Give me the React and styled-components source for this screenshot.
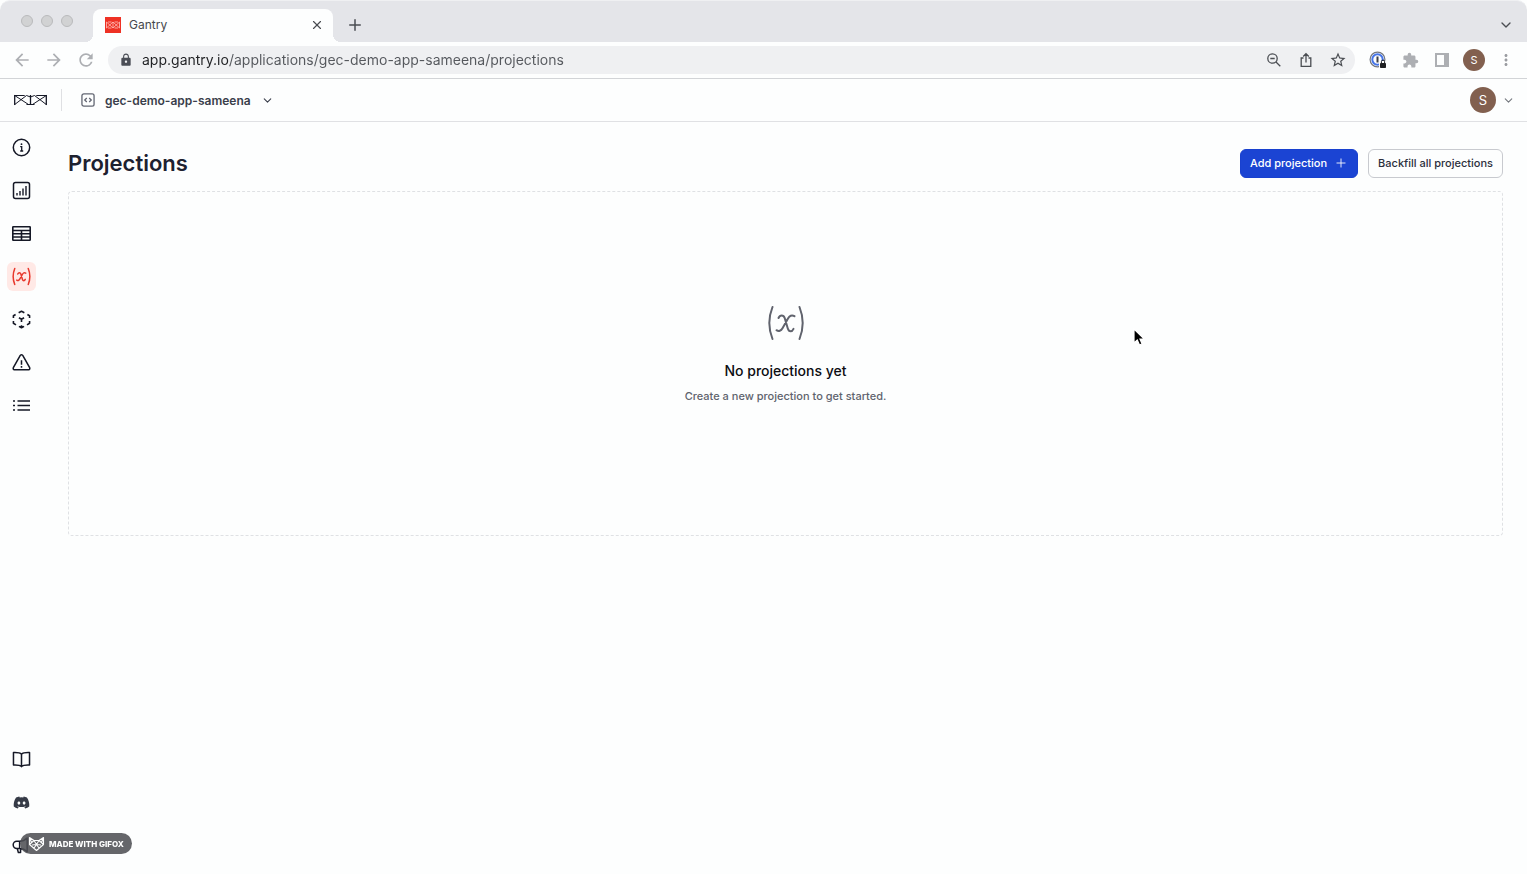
import { useState } from "react";
import styled, { createGlobalStyle } from "styled-components";
import { ChevronDown, Plus, X } from "lucide-react";
import { FaDiscord } from "react-icons/fa";
import {
  MdArrowBack,
  MdArrowForward,
  MdExtension,
  MdLock,
  MdMoreVert,
  MdRefresh,
  MdStarBorder,
} from "react-icons/md";

const GlobalStyle = createGlobalStyle`
  *, *::before, *::after {
    box-sizing: border-box;
  }

  body {
    margin: 0;
    background: #fdfefe;
    color: #1f2433;
    font-family: Inter, "Liberation Sans", sans-serif;
  }

  button, input {
    font-family: inherit;
  }
`;

const Page = styled.div`
  min-height: 100vh;
  display: flex;
  flex-direction: column;
`;

/* browser window */

const TabStrip = styled.div`
  height: 42px;
  padding: 8px 5px 0 21px;
  display: flex;
  align-items: stretch;
  background: #e4e5e9;
  border-top: 1px solid #eff0f2;
  border-radius: 10px 10px 0 0;
`;

const Lights = styled.div`
  display: flex;
  gap: 8px;
  margin: 6px 20px 0 0;
`;

const Light = styled.span`
  width: 12px;
  height: 12px;
  border-radius: 50%;
  background: #d1d2d3;
  border: 1px solid #b9babc;
`;

const Tab = styled.div`
  position: relative;
  width: 240px;
  margin-right: 6px;
  padding: 0 8px 2px 12px;
  display: flex;
  align-items: center;
  gap: 8px;
  background: #fdfefe;
  border-radius: 8px 8px 0 0;
  color: #45484d;
  font-size: 12px;

  &::before,
  &::after {
    content: "";
    position: absolute;
    bottom: 0;
    width: 8px;
    height: 8px;
  }

  &::before {
    right: 100%;
    background: radial-gradient(circle at 0 0, transparent 8px, #fdfefe 8px);
  }

  &::after {
    left: 100%;
    background: radial-gradient(circle at 100% 0, transparent 8px, #fdfefe 8px);
  }
`;

const TabTitle = styled.span`
  flex: 1;
`;

const IconButton = styled.button`
  width: ${(p) => p.$size || 32}px;
  height: ${(p) => p.$size || 32}px;
  flex: none;
  padding: 0;
  display: inline-flex;
  align-items: center;
  justify-content: center;
  border: none;
  border-radius: 6px;
  background: ${(p) => (p.$active ? "#ffe9e6" : "transparent")};
  color: ${(p) => p.$color || "#4a4d52"};
  cursor: pointer;
`;

const Spacer = styled.div`
  flex: 1;
`;

const Toolbar = styled.div`
  height: 37px;
  padding: 0 5px 0 6px;
  display: flex;
  align-items: center;
  border-bottom: 1px solid #d2d4d7;
`;

const AddressBar = styled.div`
  flex: 1;
  height: 28px;
  margin: 0 7px 0 6px;
  padding: 0 1px 0 11px;
  display: flex;
  align-items: center;
  background: #eff0f2;
  border-radius: 14px;
  color: #4a4d55;
`;

/* the host part of the address is darker than the path */
const AddressInput = styled.input`
  flex: 1;
  min-width: 0;
  height: 20px;
  margin-left: 9px;
  padding: 0 0 2px;
  border: none;
  outline: none;
  font-size: 14px;
  color: #55585d;
  background: linear-gradient(90deg, #202124 88px, #55585d 88px);
  background-clip: text;
  -webkit-background-clip: text;
  -webkit-text-fill-color: transparent;
`;

const Avatar = styled.span`
  width: ${(p) => p.$size}px;
  height: ${(p) => p.$size}px;
  display: inline-flex;
  align-items: center;
  justify-content: center;
  border-radius: 50%;
  background: #82604f;
  color: #ffffff;
  font-size: ${(p) => (p.$size > 24 ? 13 : 11)}px;
  font-weight: 400;
`;

/* application */

const AppHeader = styled.header`
  height: 43px;
  padding: 0 12px 0 14px;
  display: flex;
  align-items: center;
  border-bottom: 1px solid #e0e1e4;
`;

const HomeLink = styled.a`
  display: flex;
  padding-right: 14px;
  margin-right: 19px;
  height: 22px;
  align-items: center;
  border-right: 1px solid #dfe0e3;
  color: #151826;
`;

const AppPicker = styled.button`
  padding: 0;
  display: flex;
  align-items: center;
  gap: 10px;
  border: none;
  background: none;
  color: #3a3e4b;
  font-size: 12px;
  font-weight: 600;
  cursor: pointer;
`;

const AccountButton = styled(AppPicker)`
  margin-left: auto;
  gap: 6px;
  color: #74777e;
`;

const Body = styled.div`
  flex: 1;
  display: flex;
`;

const Sidebar = styled.nav`
  width: 43px;
  padding: 11px 0 14px 7px;
  display: flex;
  flex-direction: column;
  gap: 14px;
`;

const Main = styled.main`
  flex: 1;
  min-width: 0;
  padding: 27px 24px 24px 25px;
`;

const TitleRow = styled.div`
  display: flex;
  align-items: flex-start;
  gap: 10px;
  margin-bottom: 13px;
`;

const Title = styled.h1`
  flex: 1;
  margin: 0;
  font-size: 22px;
  line-height: 28px;
  font-weight: 600;
  color: #1d2130;
`;

const Button = styled.button`
  height: 29px;
  padding: 0 9px 1px;
  display: inline-flex;
  align-items: center;
  gap: 7px;
  border: 1px solid ${(p) => (p.$primary ? "#1941cf" : "#c8cacf")};
  border-radius: 6px;
  background: ${(p) => (p.$primary ? "#1b44d3" : "#fdfefe")};
  color: ${(p) => (p.$primary ? "#ffffff" : "#2c303d")};
  font-size: 11px;
  font-weight: 500;
  cursor: pointer;
`;

const EmptyState = styled.section`
  padding: 112px 20px 130px;
  display: flex;
  flex-direction: column;
  align-items: center;
  border: 1px dashed #dfe1e4;
  border-radius: 4px;
  text-align: center;
  color: #60636d;
`;

const EmptyTitle = styled.h2`
  margin: 19px 0 6px;
  font-size: 14px;
  line-height: 20px;
  font-weight: 500;
  color: #0c0d12;
`;

const EmptyText = styled.p`
  margin: 0;
  font-size: 11px;
  line-height: 18px;
  font-weight: 500;
`;

const GifoxBadge = styled.div`
  position: fixed;
  left: 20px;
  bottom: 20px;
  height: 21px;
  padding: 0 8px;
  display: flex;
  align-items: center;
  gap: 4px;
  border-radius: 11px;
  background: rgba(78, 79, 84, 0.87);
  color: #ffffff;
  font-size: 8px;
  font-weight: 800;
  white-space: nowrap;
`;

const Pointer = styled.svg`
  position: fixed;
  left: 1132px;
  top: 327px;
  pointer-events: none;
`;

const Favicon = () => (
  <svg width="16" height="16" viewBox="0 0 16 16" aria-hidden="true">
    <rect width="16" height="16" fill="#ee3124" />
    <path
      d="M1.5 5v6M14.500 5v6M8 5v6M1.500 5l6.500 6 6.500-6M1.500 11 8 5l6.500 6M3 5h3.500M9.500 5H13M3 11h3.500M9.500 11H13"
      fill="none"
      stroke="#ffc3bc"
      strokeWidth="0.8"
    />
  </svg>
);

const GantryLogo = () => (
  <svg width="33" height="12" viewBox="0 0 33 12" fill="none" stroke="currentColor" aria-hidden="true">
    <path d="M.7 1v10M16.500 1v10M32.300 1v10" strokeWidth="1.300" />
    <path
      d="M.7 1.500h10M22.300 1.500h10M.7 1.500l13.800 9M.7 10.500l11.800-9 4 1.500M32.300 1.500l-13.800 9M32.300 10.500l-11.800-9-4 1.500M16.500 10.500h-4M16.500 10.500h4"
      strokeWidth="1"
    />
  </svg>
);

const ZoomOutIcon = () => (
  <svg width="16" height="16" viewBox="0 0 16 16" fill="none" stroke="currentColor" strokeWidth="1.300" aria-hidden="true">
    <circle cx="6.500" cy="6.500" r="4.700" />
    <path d="M4.300 6.500h4.400M10 10l4.300 4.300" />
  </svg>
);

const ShareIcon = () => (
  <svg width="16" height="16" viewBox="0 0 16 16" fill="none" stroke="currentColor" strokeWidth="1.300" aria-hidden="true">
    <path d="M5.500 6H3.200v8.300h9.600V6h-2.300M8 10.500V1.800M5.200 4.500 8 1.700l2.800 2.800" />
  </svg>
);

const PasswordIcon = () => (
  <svg width="18" height="18" viewBox="0 0 18 18" aria-hidden="true">
    <circle cx="8.500" cy="8.500" r="7.400" fill="#fdfefe" stroke="#73777f" strokeWidth="1.200" />
    <circle cx="8.500" cy="8.500" r="5.200" fill="none" stroke="#4675e8" strokeWidth="2" />
    <path d="M8.500 5.500v6" stroke="#3a3d45" strokeWidth="2" />
    <path d="M10 10h7v7h-7z" fill="#fdfefe" />
    <rect x="11" y="12" width="6" height="5" rx="0.8" fill="#1e1f22" />
    <path d="M12.400 12v-1.300a1.600 1.600 0 0 1 3.200 0V12" fill="none" stroke="#1e1f22" />
  </svg>
);

const PanelIcon = () => (
  <svg width="14" height="14" viewBox="0 0 14 14" aria-hidden="true">
    <path d="M0 0h14v14H0zM2 2v10h7V2z" fill="currentColor" fillRule="evenodd" />
  </svg>
);

const CodeBoxIcon = () => (
  <svg width="14" height="14" viewBox="0 0 15 15" fill="none" stroke="#636773" strokeWidth="1.400" aria-hidden="true">
    <rect x="1" y="1" width="13" height="13" rx="2" />
    <path d="M6.200 5.300 4 7.500l2.200 2.200M8.800 5.300 11 7.500 8.800 9.700" />
  </svg>
);

const InfoIcon = () => (
  <svg width="19" height="19" viewBox="0 0 19 19" fill="none" stroke="currentColor" strokeWidth="1.500" aria-hidden="true">
    <circle cx="9.500" cy="9.500" r="8.200" />
    <path d="M8.200 8.700h1.500v4M8.200 13h3" strokeWidth="1.300" />
    <circle cx="9.500" cy="6.200" r="0.900" fill="currentColor" stroke="none" />
  </svg>
);

const ChartIcon = () => (
  <svg width="19" height="19" viewBox="0 0 19 19" fill="none" stroke="currentColor" strokeWidth="1.500" aria-hidden="true">
    <rect x="1.500" y="1.500" width="16" height="16" rx="2" />
    <path d="M5 14.500v-2.500M8 14.500v-4.500M11 14.500V7.500M14 14.500V5" strokeWidth="1.400" />
  </svg>
);

const TableIcon = () => (
  <svg width="19" height="15" viewBox="0 0 19 15" fill="none" stroke="currentColor" strokeWidth="1.600" aria-hidden="true">
    <rect x="0.8" y="0.8" width="17.400" height="13.400" rx="0.500" />
    <path d="M1 4.500h17M1 7.700h17M1 11h17M9.500 4.500V14" />
  </svg>
);

const ProjectionIcon = ({ size, stroke }) => (
  <svg width={size} height={size} viewBox="0 0 38 38" fill="none" stroke="currentColor" strokeWidth={stroke} strokeLinecap="round" aria-hidden="true">
    <path d="M5.500 3c-4 10-4 22 0 32M32.500 3c4 10 4 22 0 32" />
    <path d="M11.500 14c1.500-3.500 5-3.500 6.200 0l3.100 10.500c1.200 3.800 4.200 3.600 5.700.3M27.500 12.200c-2.800-1.600-5-.4-6.500 2.300l-5.500 9.800c-1.500 2.700-3.800 3.400-6 1.900" />
  </svg>
);

const ModelIcon = () => (
  <svg width="19" height="19" viewBox="0 0 20 20" fill="none" stroke="currentColor" strokeWidth="1.700" strokeLinejoin="round" aria-hidden="true">
    <path d="m7 2.800 3-1.500 3 1.500M1.500 8.300V6l2.300-1.300M16.200 4.700 18.500 6v2.300M1.500 11.700V14l2.700 1.600M18.500 11.700V14l-2.700 1.600M7.300 17.200l2.700 1.500 2.700-1.500M7.300 8.200 10 9.700l2.700-1.500M10 9.700v2.800M10 16v2.500" />
  </svg>
);

const AlertIcon = () => (
  <svg width="19" height="19" viewBox="0 0 20 19" fill="none" stroke="currentColor" strokeWidth="1.600" strokeLinejoin="round" aria-hidden="true">
    <path d="M8.700 2q1.300-1.500 2.600 0l7.300 13q.6 1.800-1.200 2.200H2.600Q.8 16.800 1.400 15z" />
    <path d="M10 7v4.800M10 13.300v1.600" />
  </svg>
);

const ListIcon = () => (
  <svg width="17" height="13" viewBox="0 0 17 13" fill="none" stroke="currentColor" strokeWidth="1.500" aria-hidden="true">
    <path d="M4.500 2H17M4.500 6.500H17M4.500 11H17M0 2h2M0 6.500h2M0 11h2" />
  </svg>
);

const BookIcon = () => (
  <svg width="19" height="17" viewBox="0 0 20 18" fill="none" stroke="currentColor" strokeWidth="1.600" strokeLinejoin="round" aria-hidden="true">
    <path d="M10 3.500C8.500 1.800 6 1.500 1.500 1.700v13.200c4.500-.2 7 0 8.500 1.600 1.500-1.600 4-1.800 8.500-1.600V1.700C14 1.500 11.500 1.800 10 3.500zM10 3.500v13" />
  </svg>
);

const MegaphoneIcon = () => (
  <svg width="19" height="17" viewBox="0 0 20 18" fill="none" stroke="currentColor" strokeWidth="1.600" strokeLinejoin="round" aria-hidden="true">
    <path d="M8 4.500H5a3.800 3.800 0 0 0 0 7.600h3zM8 4.500c3 0 6-1.500 8-3.500v14.500c-2-2-5-3.400-8-3.400M5.500 12.200l1.200 4.300h2.300v-4" />
  </svg>
);

const FoxIcon = () => (
  <svg width="17" height="16" viewBox="0 0 17 16" fill="none" stroke="currentColor" strokeWidth="1.100" strokeLinejoin="round" aria-hidden="true">
    <path d="m1.500 1.500 4.500 3h5l4.500-3v7L8.500 14.500 1.500 8.500zM1.500 8.500 6 4.500l2.500 4 2.500-4 4.500 4M1.500 1.500l2 5M15.500 1.500l-2 5M4 9l4.500-.5L13 9M6 12l2.500-3.500L11 12" />
  </svg>
);

const topLinks = [
  { label: "Overview", icon: <InfoIcon /> },
  { label: "Dashboards", icon: <ChartIcon /> },
  { label: "Data", icon: <TableIcon /> },
  { label: "Projections", icon: <ProjectionIcon size={19} stroke={3} /> },
  { label: "Models", icon: <ModelIcon /> },
  { label: "Alerts", icon: <AlertIcon /> },
  { label: "Logs", icon: <ListIcon /> },
];

const bottomLinks = [
  { label: "Documentation", icon: <BookIcon /> },
  { label: "Discord", icon: <FaDiscord size={17} color="#363b47" /> },
  { label: "Feedback", icon: <MegaphoneIcon /> },
];

function BrowserChrome() {
  const [url, setUrl] = useState(
    "app.gantry.io/applications/gec-demo-app-sameena/projections"
  );

  return (
    <>
      <TabStrip>
        <Lights>
          <Light />
          <Light />
          <Light />
        </Lights>
        <Tab>
          <Favicon />
          <TabTitle>Gantry</TabTitle>
          <IconButton $size={16} aria-label="Close tab">
            <X size={14} />
          </IconButton>
        </Tab>
        <IconButton aria-label="New tab">
          <Plus size={18} />
        </IconButton>
        <Spacer />
        <IconButton aria-label="Search tabs">
          <ChevronDown size={16} />
        </IconButton>
      </TabStrip>
      <Toolbar>
        <IconButton $color="#adafb3" aria-label="Back">
          <MdArrowBack size={20} />
        </IconButton>
        <IconButton $color="#adafb3" aria-label="Forward">
          <MdArrowForward size={20} />
        </IconButton>
        <IconButton $color="#adafb3" aria-label="Reload">
          <MdRefresh size={20} />
        </IconButton>
        <AddressBar>
          <MdLock size={14} />
          <AddressInput
            aria-label="Address"
            value={url}
            onChange={(e) => setUrl(e.target.value)}
          />
          <IconButton aria-label="Zoom out">
            <ZoomOutIcon />
          </IconButton>
          <IconButton aria-label="Share">
            <ShareIcon />
          </IconButton>
          <IconButton aria-label="Bookmark">
            <MdStarBorder size={18} />
          </IconButton>
        </AddressBar>
        <IconButton aria-label="Password manager">
          <PasswordIcon />
        </IconButton>
        <IconButton $color="#adafb3" aria-label="Extensions">
          <MdExtension size={17} />
        </IconButton>
        <IconButton $color="#adafb3" aria-label="Side panel">
          <PanelIcon />
        </IconButton>
        <IconButton aria-label="Profile">
          <Avatar $size={22}>S</Avatar>
        </IconButton>
        <IconButton $color="#9a9ca1" aria-label="Menu">
          <MdMoreVert size={18} />
        </IconButton>
      </Toolbar>
    </>
  );
}

export default function App() {
  return (
    <Page>
      <GlobalStyle />
      <BrowserChrome />
      <AppHeader>
        <HomeLink href="/" aria-label="Home">
          <GantryLogo />
        </HomeLink>
        <AppPicker>
          <CodeBoxIcon />
          <span>gec-demo-app-sameena</span>
          <ChevronDown size={13} />
        </AppPicker>
        <AccountButton aria-label="Account">
          <Avatar $size={26}>S</Avatar>
          <ChevronDown size={13} />
        </AccountButton>
      </AppHeader>
      <Body>
        <Sidebar aria-label="Main">
          {topLinks.map(({ label, icon }) => (
            <IconButton
              key={label}
              $size={29}
              $active={label === "Projections"}
              $color={label === "Projections" ? "#e8382c" : "#151826"}
              aria-label={label}
            >
              {icon}
            </IconButton>
          ))}
          <Spacer />
          {bottomLinks.map(({ label, icon }) => (
            <IconButton key={label} $size={29} $color="#151826" aria-label={label}>
              {icon}
            </IconButton>
          ))}
        </Sidebar>
        <Main>
          <TitleRow>
            <Title>Projections</Title>
            <Button $primary>
              Add projection
              <Plus size={14} strokeWidth={1.5} />
            </Button>
            <Button>Backfill all projections</Button>
          </TitleRow>
          <EmptyState>
            <ProjectionIcon size={38} stroke={2} />
            <EmptyTitle>No projections yet</EmptyTitle>
            <EmptyText>Create a new projection to get started.</EmptyText>
          </EmptyState>
        </Main>
      </Body>
      <GifoxBadge>
        <FoxIcon />
        MADE WITH GIFOX
      </GifoxBadge>
      <Pointer width="14" height="20" viewBox="0 0 14 20" aria-hidden="true">
        <path
          d="M2 2v14l3.300-3 2.200 5 2.600-1.100L8 12h4.300z"
          fill="#000000"
          stroke="#ffffff"
          strokeWidth="1.200"
        />
      </Pointer>
    </Page>
  );
}
